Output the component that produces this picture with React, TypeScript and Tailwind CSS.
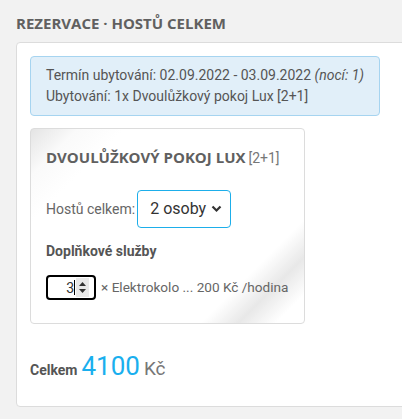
import React from "react";

export default function App() {
  return (
    <div className="w-[402px] h-[419px] overflow-hidden bg-[#f2f2f2] font-['Roboto',sans-serif] pt-[13px]">
      <h2 className="pl-[16px] font-['Open_Sans',sans-serif] font-bold text-[15px] leading-[21px] text-[#606060]">
        REZERVACE · HOSTŮ CELKEM
      </h2>
      <div className="mt-[8px] ml-[16px] w-[410px] h-[365px] bg-white border border-[#dcdcdc] rounded-[4px] p-[13px]">
        <div className="w-[350px] bg-[#e1eff9] border border-[#a6d4f0] rounded-[4px] px-[15px] py-[8px] text-[14px] leading-[21px] text-[#555] whitespace-nowrap">
          <div>
            Termín ubytování: 02.09.2022 - 03.09.2022 <i>(nocí: 1)</i>
          </div>
          <div>Ubytování: 1x Dvoulůžkový pokoj Lux [2+1]</div>
        </div>
        <div className="mt-[12px] w-[275px] h-[196px] border border-[#dcdcdc] rounded-[4px] bg-[linear-gradient(135deg,#e4e4e4_0%,#fafafa_10%,#fff_20%,#fff_78%,#e8e8e8_86%,#fff_94%)] pt-[18px] px-[15px]">
          <div className="text-[15px] leading-[20px] text-[#606060] whitespace-nowrap">
            <span className="font-['Open_Sans',sans-serif] font-bold">DVOULŮŽKOVÝ POKOJ LUX</span>
            <span className="ml-[3px] text-[14px] text-[#777] font-['Roboto',sans-serif]">[2+1]</span>
          </div>
          <div className="mt-[22px] flex items-center gap-[2px]">
            <span className="text-[14px] text-[#666]">Hostů celkem:</span>
            <div className="w-[94px] h-[38px] border border-[#1daeea] rounded-[4px] flex items-center justify-between pl-[12px] pr-[8px] text-[16px] text-[#333] bg-white">
              <span>2 osoby</span>
              <svg width="11" height="8" viewBox="0 0 11 8">
                <path d="M1.5 1.5 L5.5 5.5 L9.5 1.5" stroke="#333" strokeWidth="2.2" fill="none" />
              </svg>
            </div>
          </div>
          <div className="mt-[13px] text-[14px] leading-[20px] font-bold text-[#555]">Doplňkové služby</div>
          <div className="mt-[14px] flex items-center gap-[5px] whitespace-nowrap">
            <div className="w-[50px] h-[25px] shrink-0 border-2 border-black rounded-[4px] flex items-center justify-end pr-[5px] bg-white">
              <span className="text-[14px] text-[#333] leading-none">3</span>
              <span className="w-[1px] h-[15px] bg-black"></span>
              <div className="ml-[1px] w-[13px] h-[19px] bg-[#e9e9e9] flex flex-col items-center justify-center gap-[3px]">
                <svg width="7" height="4" viewBox="0 0 7 4"><path d="M0 4 L3.5 0 L7 4 Z" fill="#333" /></svg>
                <svg width="7" height="4" viewBox="0 0 7 4"><path d="M0 0 L3.5 4 L7 0 Z" fill="#333" /></svg>
              </div>
            </div>
            <span className="text-[13.6px] text-[#666]">× Elektrokolo ... 200 Kč /hodina</span>
          </div>
        </div>
        <div className="mt-[27px] flex items-baseline">
          <span className="text-[14px] font-bold text-[#555]">Celkem</span>
          <span className="ml-[4px] text-[26px] leading-[30px] text-[#1aafee]">4100</span>
          <span className="ml-[4px] text-[19px] text-[#777]">Kč</span>
        </div>
      </div>
    </div>
  );
}
